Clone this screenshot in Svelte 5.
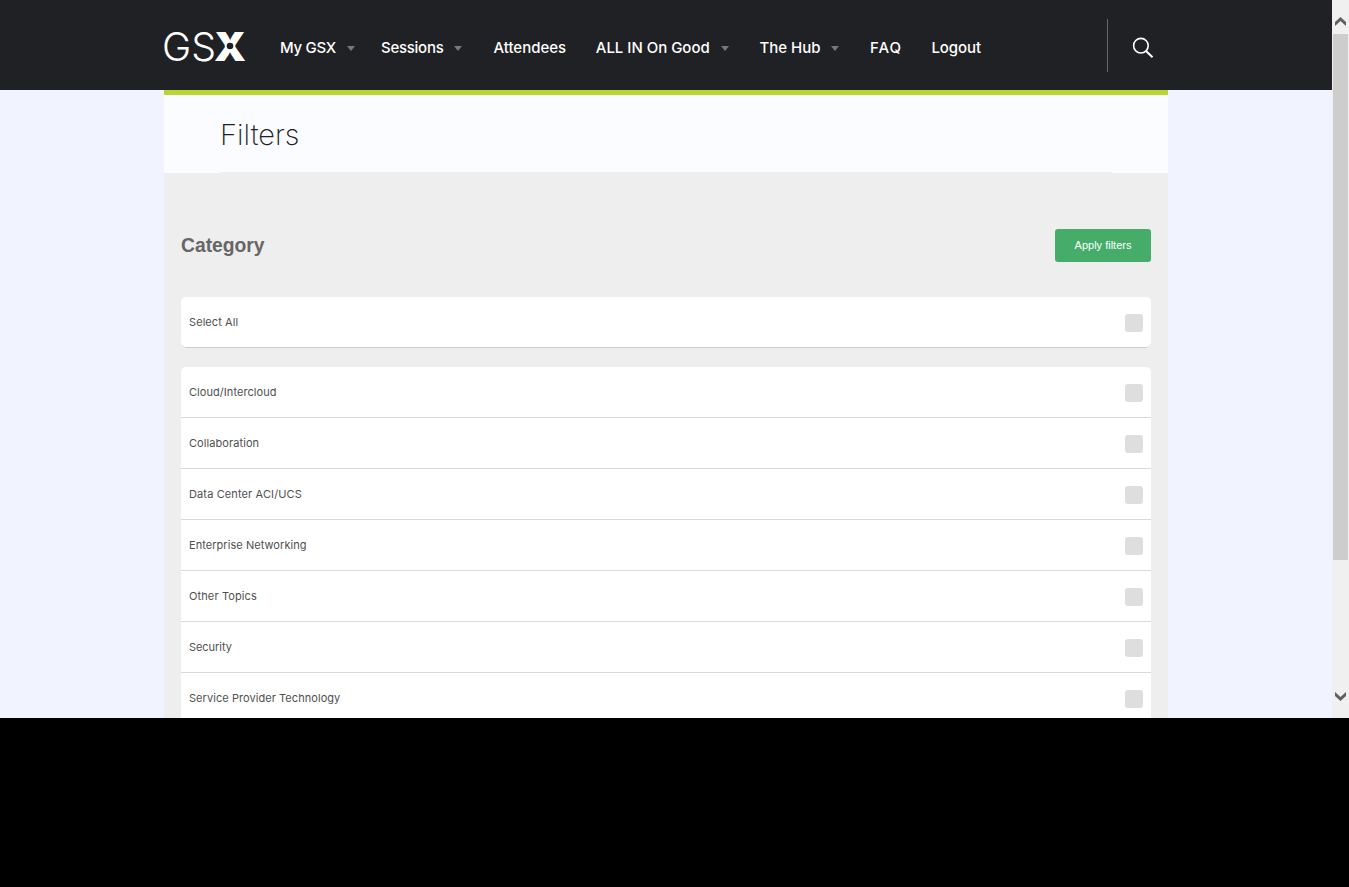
<script>
  const nav = [
    { label: 'My GSX', menu: true, width: 101, track: -0.28 },
    { label: 'Sessions', menu: true, width: 112.5, track: -0.27 },
    { label: 'Attendees', menu: false, width: 102.3, track: -0.03 },
    { label: 'ALL IN On Good', menu: true, width: 163.7, track: -0.02 },
    { label: 'The Hub', menu: true, width: 110.5, track: -0.02 },
    { label: 'FAQ', menu: false, width: 61.5, track: 1 },
    { label: 'Logout', menu: false, width: 60, track: -0.1 }
  ];
  const categories = [
    { label: 'Cloud/Intercloud', track: 0.06 },
    { label: 'Collaboration', track: 0.08 },
    { label: 'Data Center ACI/UCS', track: 0.12 },
    { label: 'Enterprise Networking', track: 0.05 },
    { label: 'Other Topics', track: 0.12 },
    { label: 'Security', track: -0.05 },
    { label: 'Service Provider Technology', track: 0.06 }
  ];
</script>

<div class="screen">
  <div class="page">
    <header>
      <div class="bar">
        <svg class="logo" width="82" height="34" viewBox="0 0 82 34" aria-label="GSX">
          <text class="thin" x="-2" y="30.5" textLength="54" lengthAdjust="spacingAndGlyphs">GS</text>
          <text class="heavy" x="50" y="31" textLength="32" lengthAdjust="spacingAndGlyphs">X</text>
          <circle cx="66" cy="16" r="4.3" fill="#202124" stroke="#fff" stroke-width="2" />
        </svg>
        <nav>
          {#each nav as item}
            <a style="width:{item.width}px">
              <span style="letter-spacing:{item.track}px">{item.label}</span>
              {#if item.menu}<i></i>{/if}
            </a>
          {/each}
        </nav>
        <div class="search">
          <svg width="22" height="22" viewBox="0 0 22 22" fill="none" stroke="#fff">
            <circle cx="8.9" cy="8.7" r="7.3" stroke-width="1.6" />
            <path d="M14 14L20.5 20.3" stroke-width="2" />
          </svg>
        </div>
      </div>
    </header>
    <main>
      <div class="title"><h1>Filters</h1></div>
      <section>
        <div class="head">
          <h2>Category</h2>
          <button>Apply filters</button>
        </div>
        <div class="list all">
          <div class="row"><span>Select All</span><b></b></div>
        </div>
        <div class="list">
          {#each categories as c}
            <div class="row"><span style="letter-spacing:{c.track}px">{c.label}</span><b></b></div>
          {/each}
        </div>
      </section>
    </main>
  </div>
  <aside>
    <svg width="17" height="34" viewBox="0 0 17 34"><path d="M3 26V22L8.5 17L14 22V26L8.5 21Z" fill="#606060" /></svg>
    <div class="thumb"></div>
    <svg class="down" width="17" height="34" viewBox="0 0 17 34"><path d="M3 8V12L8.5 17L14 12V8L8.5 13Z" fill="#606060" /></svg>
  </aside>
</div>

<style>
  :global(body) { background: #000; overflow: hidden; }
  .screen { display: flex; width: 1349px; height: 718px; overflow: hidden; font-family: Inter, "Liberation Sans", sans-serif; }
  .page { width: 1332px; height: 718px; overflow: hidden; background: #f1f4ff; }
  header { height: 90px; background: #202124; }
  .bar { display: flex; align-items: center; width: 1004px; height: 90px; margin-left: 164px; }
  .logo { flex: none; margin-top: 3px; overflow: visible; fill: #fff; }
  .thin { font: 300 39px Inter, sans-serif; }
  .heavy { font: 900 40px Inter, sans-serif; }
  nav { display: flex; flex: 1; margin-left: 34px; }
  nav a { display: flex; flex: none; align-items: center; height: 20px; margin-top: 5px; color: #fff; font-size: 15px; font-weight: 500; line-height: 20px; white-space: nowrap; }
  nav i { margin: 1px 0 0 11px; border: solid transparent; border-width: 5px 4.5px 0; border-top-color: #77787a; }
  .search { display: flex; align-items: center; width: 61px; height: 53px; margin-top: 1px; padding: 4px 0 0 24px; box-sizing: border-box; border-left: 1px solid #67686a; }
  main { width: 1004px; height: 628px; margin-left: 164px; box-sizing: border-box; border-top: 5px solid #b9d532; background: #eee; }
  .title { height: 78px; padding: 0 56px; box-sizing: border-box; background: #fbfcff; }
  h1 { height: 78px; margin: 0; box-sizing: border-box; border-bottom: 1px solid #eee; color: #202124; font-size: 29px; font-weight: 250; letter-spacing: 0; line-height: 80px; }
  section { padding: 56px 17px 0; }
  .head { display: flex; align-items: center; justify-content: space-between; height: 33px; margin-bottom: 35px; }
  h2 { margin: 0; color: #666; font: bold 19.3px/33px "Liberation Sans", Arial, sans-serif; }
  button { width: 96px; height: 33px; padding: 0 0 2px; border: 0; border-radius: 3px; background: #45ad69; color: #fff; font: 11px "Liberation Sans", Arial, sans-serif; }
  .list { border-radius: 5px; background: #fff; overflow: hidden; }
  .all { margin-bottom: 19px; }
  .all span { letter-spacing: 0.08px; }
  .row { display: flex; align-items: center; justify-content: space-between; height: 51px; padding: 0 8px; box-sizing: border-box; border-bottom: 1px solid #d9d9d9; color: #505050; font-size: 11px; font-weight: 400; }
  .row b { width: 18px; height: 18px; margin-top: 2px; border-radius: 3px; background: #dedede; }
  .all .row { border-radius: 5px; border-bottom-color: #ccc; }
  aside { display: flex; flex-direction: column; width: 17px; height: 718px; background: #f0f0f0; }
  .thumb { width: 15px; height: 526px; margin-left: 1px; background: #cdcdcd; }
  .down { margin-top: auto; }
</style>
